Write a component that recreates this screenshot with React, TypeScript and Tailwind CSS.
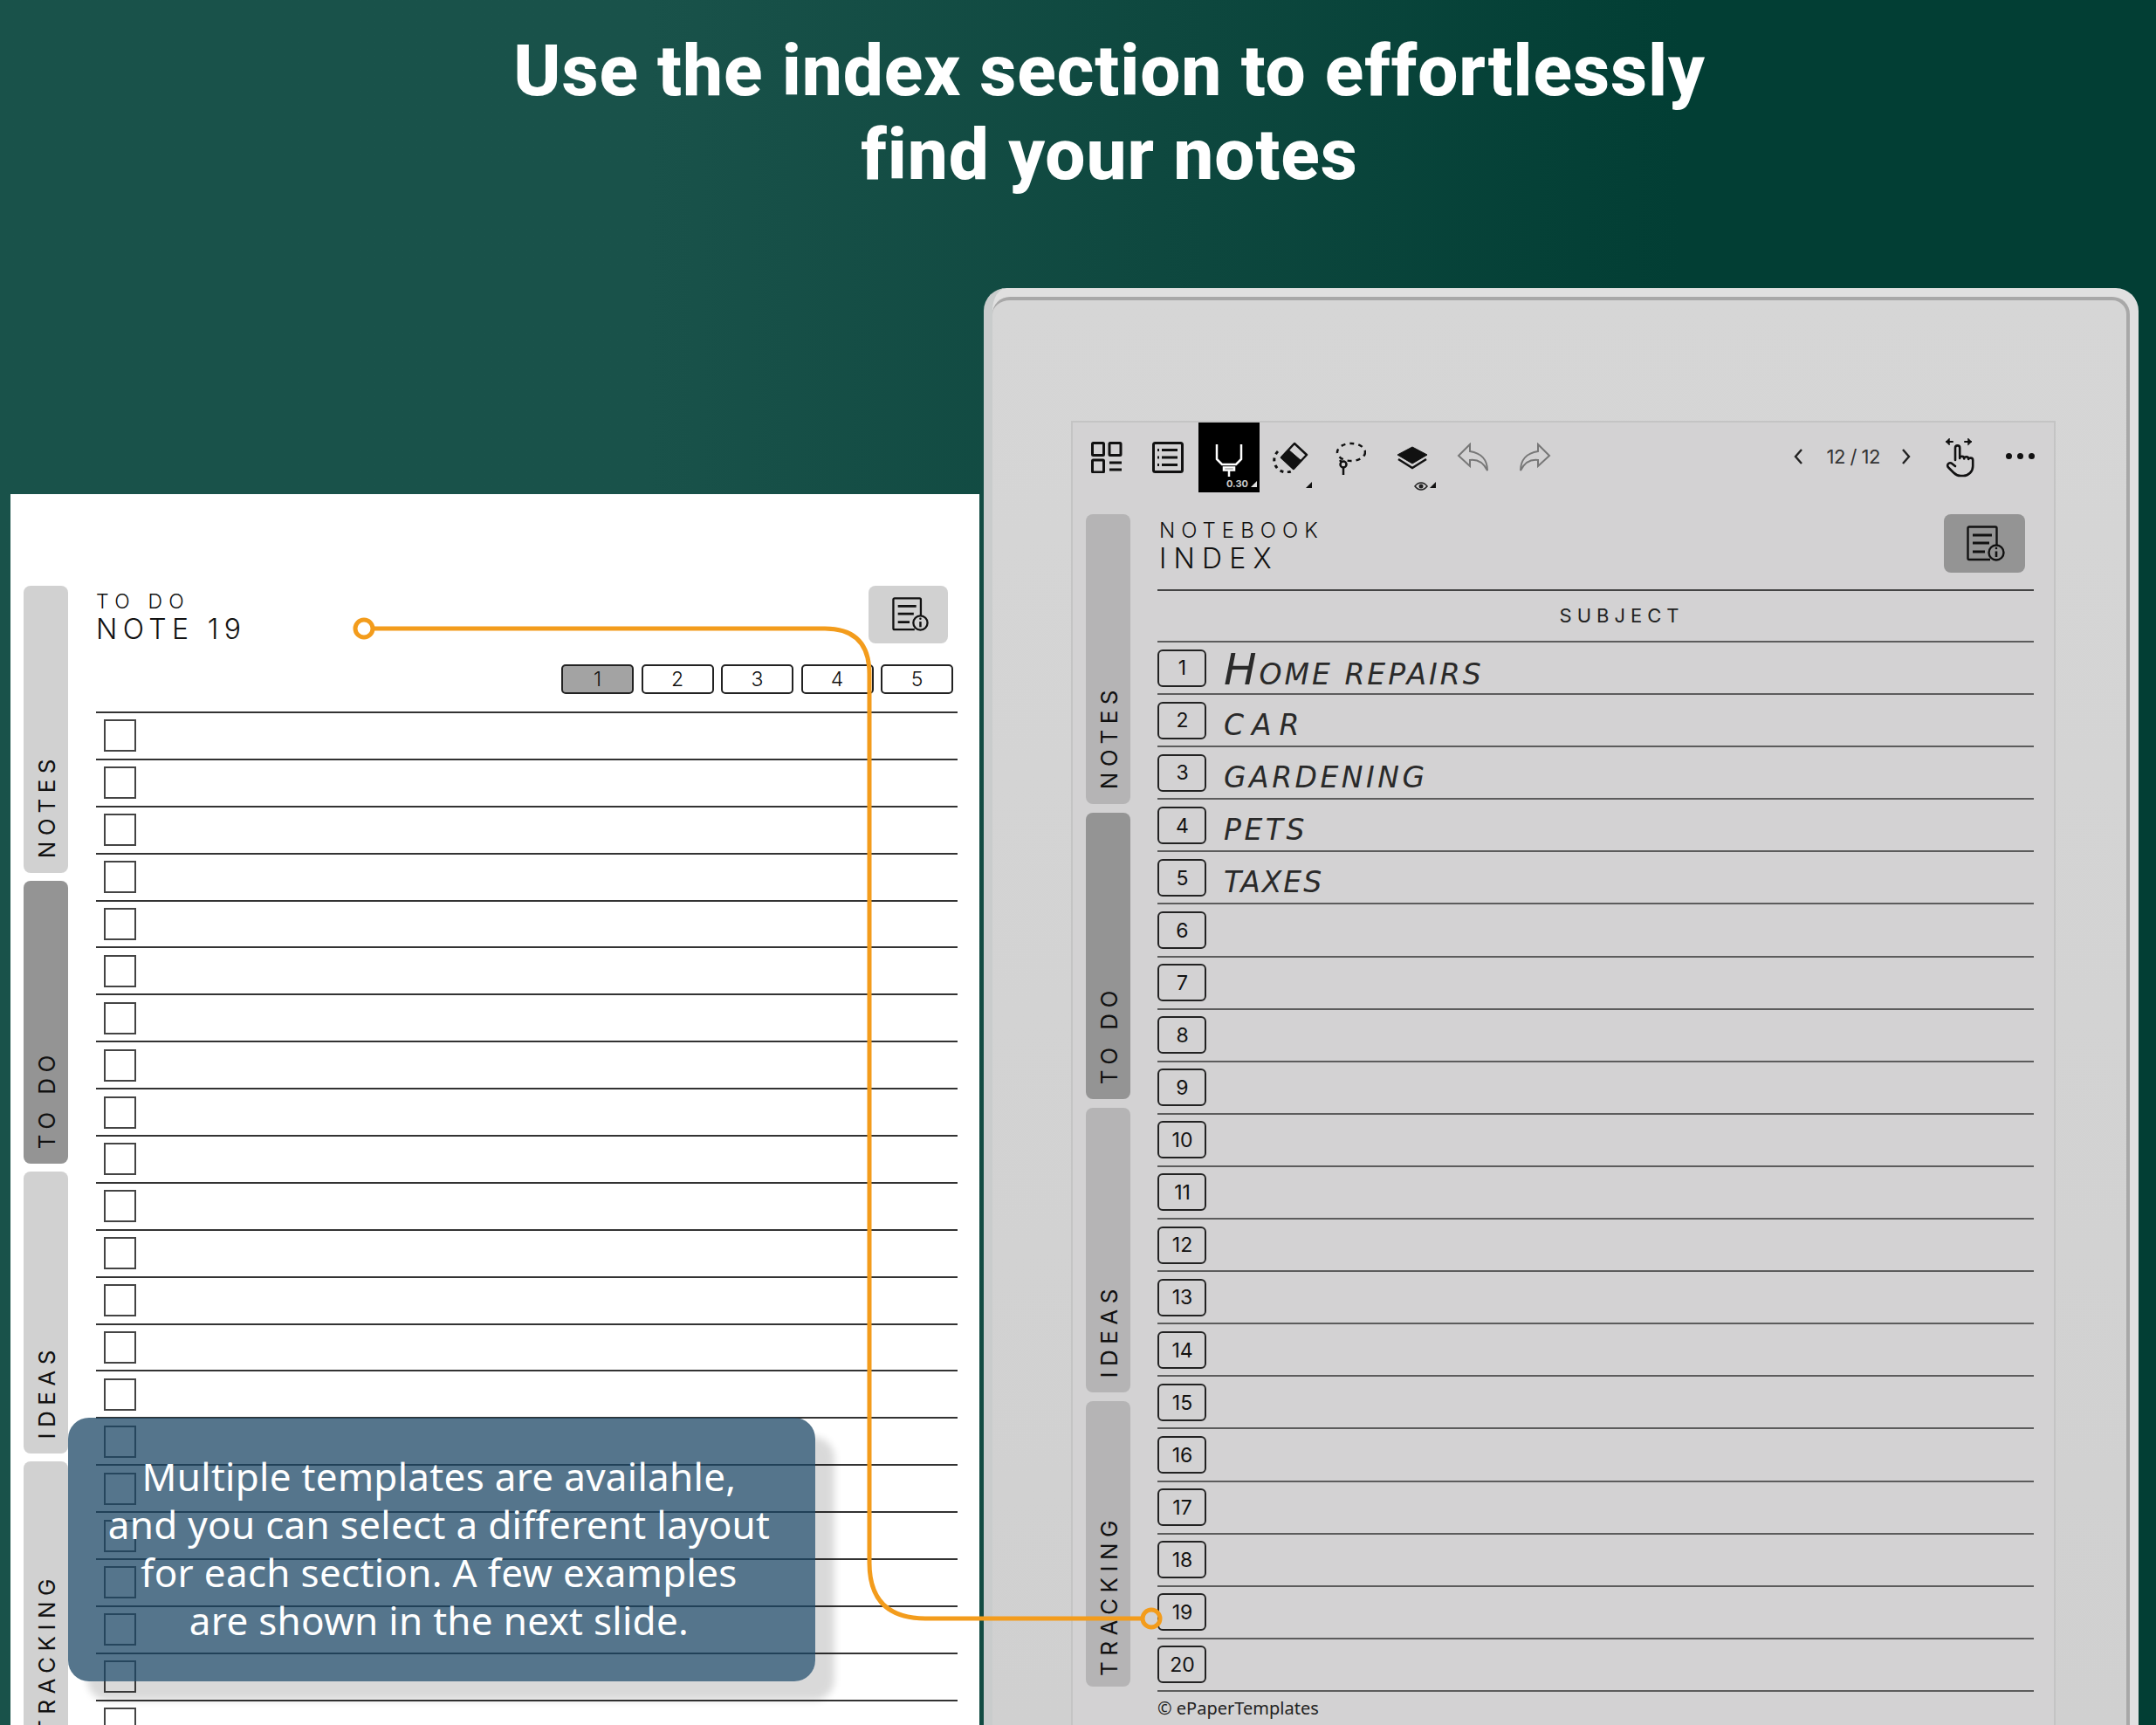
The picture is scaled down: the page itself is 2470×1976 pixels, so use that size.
import React from "react";

const SANS = "[font-family:'Inter',sans-serif]";

const GridIcon = () => (
  <svg width="36" height="36" viewBox="0 0 36 36" fill="none" stroke="#111" strokeWidth="3">
    <rect x="1.5" y="1.5" width="13" height="14" rx="1" />
    <rect x="21" y="1.5" width="13" height="14" rx="1" />
    <rect x="1.5" y="21" width="13" height="14" rx="1" />
    <path d="M21 24h14M21 32h14" />
  </svg>
);

const ListIcon = () => (
  <svg width="36" height="36" viewBox="0 0 36 36" fill="none" stroke="#111" strokeWidth="2.5">
    <rect x="1.5" y="1.5" width="33" height="33" rx="2" strokeWidth="3" />
    <path d="M11 9.5h18M11 18h18M11 26.5h18" strokeWidth="3" />
    <path d="M6 9.5h2M6 18h2M6 26.5h2" strokeWidth="3" />
  </svg>
);

const PenIcon = () => (
  <svg width="32" height="38" viewBox="0 0 32 38" fill="none" stroke="#fff" strokeWidth="2.5">
    <path d="M2 1v17l6 6h16l6-6V1" />
    <path d="M10 27.500h12v3H10zM16 30.500V38" />
  </svg>
);

const EraserIcon = () => (
  <svg width="42" height="36" viewBox="0 0 42 36">
    <path d="M26 2l14 13-15 16-14-13z" fill="#d3d2d3" stroke="#111" strokeWidth="2.5" strokeLinejoin="round" />
    <path d="M11 17l8-8 15 13-9 9z" fill="#111" stroke="#111" strokeLinejoin="round" />
    <path d="M7 11a14 14 0 0 0 15 23" fill="none" stroke="#111" strokeWidth="3" strokeDasharray="4 4.500" />
  </svg>
);

const LassoIcon = () => (
  <svg width="36" height="38" viewBox="0 0 36 38" fill="none" stroke="#111" strokeWidth="2.5">
    <ellipse cx="19" cy="12" rx="16" ry="10" strokeDasharray="5 5" />
    <circle cx="10" cy="26" r="3.500" />
    <path d="M10 30v8M6 21l1.500 2" />
  </svg>
);

const LayersIcon = () => (
  <svg width="38" height="28" viewBox="0 0 38 28">
    <path d="M19 1l17 9-17 10L2 10z" fill="#111" stroke="#111" strokeLinejoin="round" />
    <path d="M3 15l16 10 16-10" fill="none" stroke="#111" strokeWidth="2.5" />
  </svg>
);

const UndoIcon = ({ flip }: { flip?: boolean }) => (
  <svg
    width="38"
    height="34"
    viewBox="0 0 38 34"
    fill="none"
    stroke="#777"
    strokeWidth="2"
    className={flip ? "-scale-x-100" : ""}
  >
    <path d="M15 2L2 15l13 12v-7c8-1 15 2 20 12 0-12-7-20-20-22z" />
  </svg>
);

const HandIcon = () => (
  <svg width="36" height="48" viewBox="0 0 36 48" fill="none" stroke="#111" strokeWidth="2.6" strokeLinecap="round" strokeLinejoin="round">
    <path d="M12 27V13a2.600 2.600 0 0 1 5.200 0v12c0-3 5-3 5 .5 0-3 5-3 5 .5 0-2 5-2 5 1v7a11 11 0 0 1-11 11h-3c-4 0-6-1.500-8-3.500l-6-6a3 3 0 0 1 4-4.500l3.800 3" />
    <path d="M2 6h7M30 6h-7" strokeWidth="2" />
    <path d="M5 2.500L1.500 6 5 9.500zM27 2.500L30.500 6 27 9.500z" fill="#111" strokeWidth="1" />
  </svg>
);

const EyeIcon = () => (
  <svg width="16" height="10" viewBox="0 0 16 10" fill="none" stroke="#222" strokeWidth="1.500">
    <path d="M1 5c4-5.300 10-5.300 14 0-4 5.300-10 5.300-14 0z" />
    <circle cx="8" cy="5" r="2.500" fill="#222" stroke="none" />
  </svg>
);

const InfoDocIcon = ({ size }: { size: number }) => (
  <svg width={size} height={size} viewBox="0 0 44 42" fill="none" stroke="#111" strokeWidth="2.4">
    <path d="M27 39H3a1.500 1.500 0 0 1-1.500-1.500V3A1.500 1.500 0 0 1 3 1.500h30A1.500 1.500 0 0 1 34.500 3v20" />
    <path d="M7 11h22M7 20h19M7 30h14" strokeWidth="2.8" />
    <circle cx="34" cy="31" r="8.500" />
    <path d="M34 29.500v6.500" strokeWidth="2.600" />
    <circle cx="34" cy="26" r="1.300" fill="#111" stroke="none" />
  </svg>
);

const Tab = ({ label, height, active, device, low }: { label: string; height: string; active?: boolean; device?: boolean; low?: boolean }) => (
  <div
    className={`${height} w-[51px] shrink-0 rounded-lg flex items-end justify-center pl-[2px] ${low ? "pb-[12px]" : "pb-[17px]"} ${
      active ? "bg-[#949494]" : device ? "bg-[#b5b4b5]" : "bg-[#d1d1d1]"
    }`}
  >
    <span className={`${SANS} [writing-mode:vertical-rl] rotate-180 text-[26px] leading-none font-normal tracking-[6.500px] text-[#111] whitespace-nowrap`}>
      {label}
    </span>
  </div>
);

const Handwriting = ({ children, className }: { children: React.ReactNode; className: string }) => (
  <span className={`[font-family:'DejaVu_Sans',sans-serif] italic text-[#2a2a2a] leading-none whitespace-nowrap text-[33px] ${className}`}>
    {children}
  </span>
);

const IndexRow = ({ n }: { n: number }) => {
  const written: Record<number, React.ReactNode> = {
    1: (
      <Handwriting className="tracking-[3px] -mt-[4px]">
        <span className="text-[50px] leading-[40px]">H</span>OME REPAIRS
      </Handwriting>
    ),
    2: <Handwriting className="tracking-[9px]">CAR</Handwriting>,
    3: <Handwriting className="tracking-[3.500px]">GARDENING</Handwriting>,
    4: <Handwriting className="tracking-[3.500px]">PETS</Handwriting>,
    5: <Handwriting className="tracking-[2px]">TAXES</Handwriting>,
  };
  return (
    <div className="h-[60.1px] border-b-2 border-[#5c5c5c] flex items-center">
      <div className={`${SANS} w-[56px] h-[43px] pl-[1px] pt-[1px] rounded-md border-2 border-[#222] flex items-center justify-center text-[23px] text-[#111]`}>
        {n}
      </div>
      <div className="ml-[20px] pt-[10px] flex items-end">{written[n]}</div>
    </div>
  );
};

const Device = () => (
  <div className="w-[1323px] h-[1646px] ml-[5px] rounded-t-[26px] bg-[#e0e0e0] border-l-[10px] border-l-[#c9cccc] pt-[10px] pr-[10px]">
    <div className="h-full rounded-t-[20px] border-t-[4px] border-r-[4px] border-[#a8a8a8] bg-linear-to-b from-[#d6d6d6] to-[#d0d0d0] pt-[138px] pl-[90px]">
      <div className="w-[1128px] h-[1500px] bg-[#d3d2d3] border-t-2 border-x-2 border-[#c4c4c4] pl-[15px]">
        <div className="h-[80px] flex items-start relative -ml-[15px]">
          <div className="ml-[21px] mt-[22px]"><GridIcon /></div>
          <div className="ml-[34px] mt-[22px]"><ListIcon /></div>
          <div className="ml-[17px] w-[70px] h-[80px] bg-black flex flex-col items-center pt-[24px] relative">
            <PenIcon />
            <span className={`${SANS} absolute right-[13px] bottom-[3px] text-[11px] leading-[14px] font-bold text-[#ccc]`}>0.30</span>
            <span className="absolute right-[3px] bottom-[6px] border-l-[7px] border-b-[7px] border-l-transparent border-b-[#ddd]" />
          </div>
          <div className="ml-[14px] mt-[22px]"><EraserIcon /></div>
          <span className="mt-[68px] -ml-[3px] border-l-[7px] border-b-[7px] border-l-transparent border-b-[#111]" />
          <div className="ml-[26px] mt-[22px]"><LassoIcon /></div>
          <div className="ml-[34px] mt-[27px] relative">
            <LayersIcon />
            <span className="absolute left-[21px] top-[41px]"><EyeIcon /></span>
            <span className="absolute left-[39px] top-[41px] border-l-[7px] border-b-[7px] border-l-transparent border-b-[#111]" />
          </div>
          <div className="ml-[32px] mt-[23px]"><UndoIcon /></div>
          <div className="ml-[32px] mt-[23px]"><UndoIcon flip /></div>
          <div className="ml-auto flex items-start">
            <svg className="mt-[29px]" width="12" height="20" viewBox="0 0 12 20" fill="none" stroke="#222" strokeWidth="2.4"><path d="M10 2L3 10l7 8" /></svg>
            <span className={`${SANS} ml-[26px] mt-[25px] text-[22px] leading-[28px] text-[#333] tracking-[-0.500px]`}>12 / 12</span>
            <svg className="ml-[24px] mt-[29px]" width="12" height="20" viewBox="0 0 12 20" fill="none" stroke="#222" strokeWidth="2.400"><path d="M2 2l7 8-7 8" /></svg>
            <div className="ml-[38px] mt-[16px]"><HandIcon /></div>
            <div className="ml-[34px] mt-[35px] mr-[22px] flex gap-[6px]">
              <span className="w-[7px] h-[7px] rounded-full bg-[#111]" />
              <span className="w-[7px] h-[7px] rounded-full bg-[#111]" />
              <span className="w-[7px] h-[7px] rounded-full bg-[#111]" />
            </div>
          </div>
        </div>
        <div className="flex pt-[25px]">
          <div className="flex flex-col gap-[10px]">
            <Tab device label="NOTES" height="h-[332px]" />
            <Tab device active label="TO DO" height="h-[328px]" />
            <Tab device label="IDEAS" height="h-[326px]" />
            <Tab device low label="TRACKING" height="h-[327px]" />
          </div>
          <div className="ml-[31px] w-[1004px]">
            <div className="h-[88px] border-b-2 border-[#444] flex justify-between pl-[2px] pr-[10px]">
              <div className={`${SANS} font-light text-[#111] pt-[5px]`}>
                <div className="text-[24px] leading-[28px] tracking-[7px]">NOTEBOOK</div>
                <div className="text-[32px] leading-[36px] tracking-[8.200px]">INDEX</div>
              </div>
              <div className="w-[93px] h-[67px] pl-[2px] rounded-lg bg-[#949494] flex items-center justify-center">
                <InfoDocIcon size={44} />
              </div>
            </div>
            <div className={`${SANS} h-[59px] pl-[60px] border-b-2 border-[#5c5c5c] flex items-center justify-center text-[22px] tracking-[6px] text-[#222]`}>
              SUBJECT
            </div>
            {Array.from({ length: 20 }, (_, i) => (
              <IndexRow key={i} n={i + 1} />
            ))}
            <div className="pt-[5px] [font-family:'Noto_Sans',sans-serif] text-[20px] leading-[28px] text-[#222]">© ePaperTemplates</div>
          </div>
        </div>
      </div>
    </div>
  </div>
);

const NotePage = () => (
  <div className="w-[1110px] h-[1410px] ml-[12px] mt-[236px] bg-white overflow-hidden flex pt-[105px] pl-[15px] shrink-0">
    <div className="flex flex-col gap-[9px]">
      <Tab label="NOTES" height="h-[329px]" />
      <Tab active label="TO DO" height="h-[324px]" />
      <Tab label="IDEAS" height="h-[323px]" />
      <Tab low label="TRACKING" height="h-[325px]" />
    </div>
    <div className="ml-[32px] w-[987px]">
      <div className="h-[90px] flex justify-between pr-[11px]">
        <div className={`${SANS} font-light text-[#111] pt-[5px]`}>
          <div className="text-[23px] leading-[27px] tracking-[7.200px]">TO DO</div>
          <div className="text-[32px] leading-[36px] tracking-[6.400px]">NOTE 19</div>
        </div>
        <div className="w-[91px] h-[66px] pl-[4px] rounded-lg bg-[#d1d1d1] flex items-center justify-center">
          <InfoDocIcon size={42} />
        </div>
      </div>
      <div className="flex justify-end gap-[8.500px] pr-[5px]">
        {[1, 2, 3, 4, 5].map((n) => (
          <div
            key={n}
            className={`${SANS} w-[83px] h-[34px] rounded-[5px] border-2 border-[#222] flex items-center justify-center text-[23px] font-light text-[#111] ${
              n === 1 ? "bg-[#a3a3a3]" : "bg-white"
            }`}
          >
            {n}
          </div>
        ))}
      </div>
      <div className="mt-[20px] border-t-2 border-[#333]">
        {Array.from({ length: 22 }, (_, i) => (
          <div key={i} className="h-[53.900px] border-b-2 border-[#333] flex items-center pl-[9px]">
            <div className="w-[37px] h-[37px] border-2 border-[#444]" />
          </div>
        ))}
      </div>
    </div>
  </div>
);

export default function App() {
  return (
    <div className="relative w-[2470px] h-[1976px] overflow-hidden bg-linear-to-r from-[#19524a] from-30% to-[#023e34] to-78%">
      <div className="h-[330px] pt-[33px] pl-[72px] text-center text-white [font-family:'Roboto',sans-serif] font-extrabold text-[82px] leading-[96px] tracking-[0.900px]">
        <div>Use the index section to effortlessly</div>
        <div>find your notes</div>
      </div>
      <div className="flex">
        <NotePage />
        <Device />
      </div>

      {/* callout over the note page */}
      <div className="absolute left-[78px] top-[1624px] w-[856px] h-[302px] rounded-[24px] bg-[#1c4765]/75 shadow-[22px_22px_8px_rgba(0,0,0,0.15)] pt-[40px] pr-[6px] text-center text-white [font-family:'Noto_Sans',sans-serif] text-[44px] leading-[55px] tracking-[0.300px]">
        <div>Multiple templates are availahle,</div>
        <div>and you can select a different layout</div>
        <div>for each section. A few examples</div>
        <div>are shown in the next slide.</div>
      </div>

      {/* connector from the page title to the index row */}
      <svg className="absolute left-0 top-0 pointer-events-none" width="2470" height="1976" fill="none" stroke="#f39c1c" strokeWidth="5">
        <path d="M428 720H945Q996 720 996 772V1790Q996 1854 1060 1854H1308" />
        <circle cx="417" cy="720" r="10" />
        <circle cx="1319" cy="1854" r="10" />
      </svg>
    </div>
  );
}
